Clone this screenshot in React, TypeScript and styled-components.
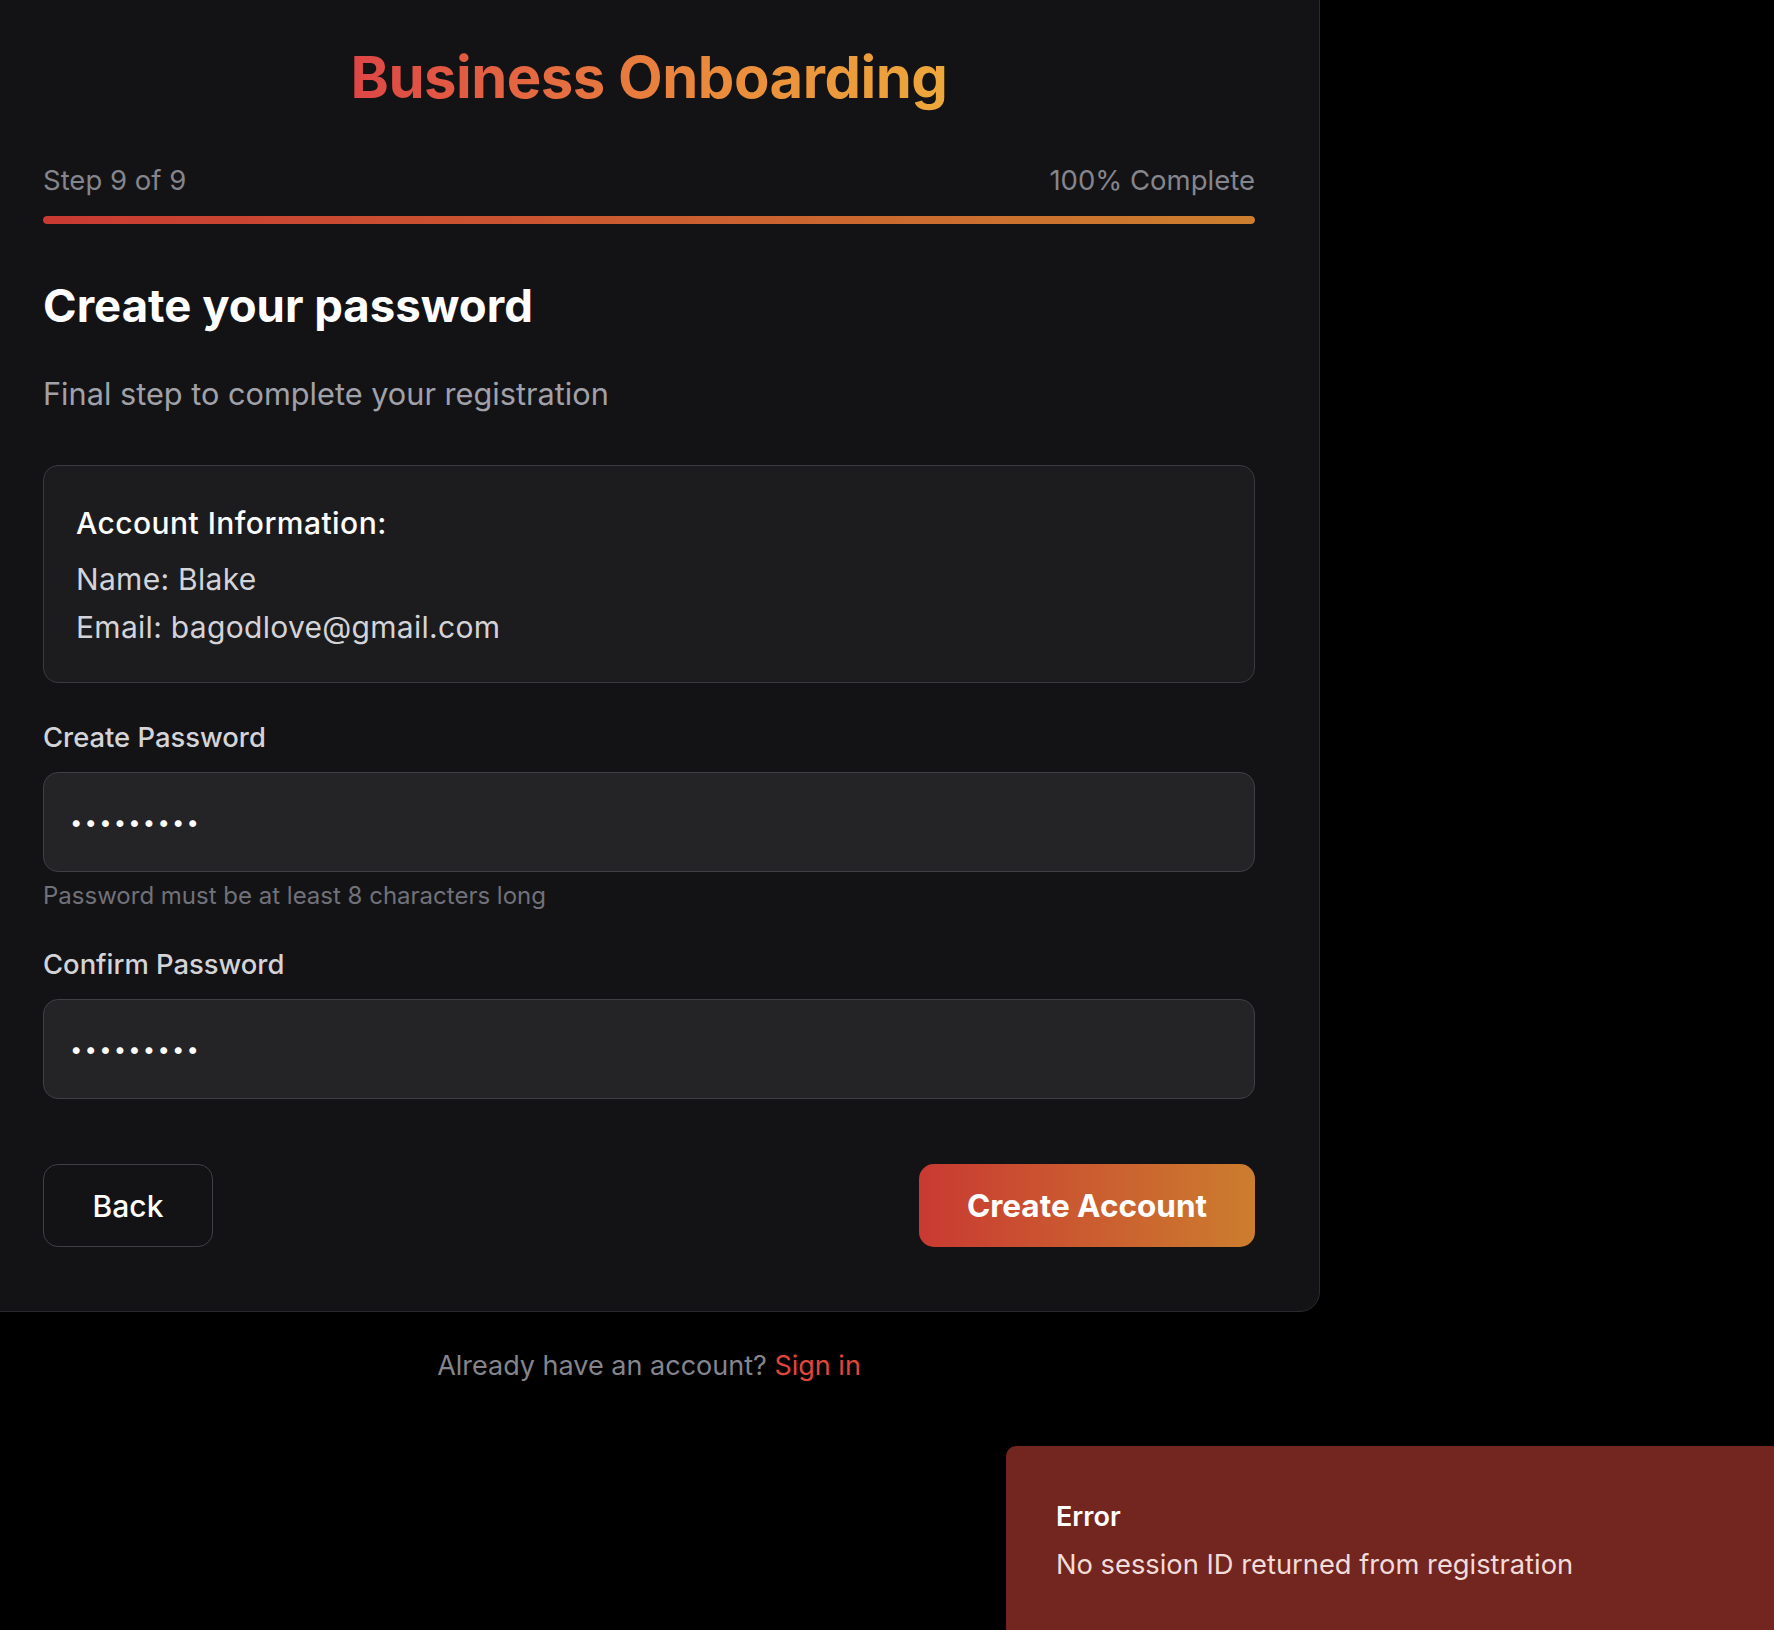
import { createGlobalStyle, styled } from "styled-components";

const GlobalStyle = createGlobalStyle`
  html, body {
    margin: 0;
    padding: 0;
    background: #000;
    overflow: hidden;
  }
  body {
    font-family: Inter, "Noto Sans", "Liberation Sans", sans-serif;
    color: #fff;
  }
  * {
    box-sizing: border-box;
  }
`;

const Page = styled.div`
  width: 1342px;
  margin: -24px 0 0 -22px;
  display: flex;
  flex-direction: column;
  align-items: center;
`;

const Card = styled.div`
  width: 100%;
  background: #131315;
  border: 1px solid #2a2a2e;
  border-radius: 20px;
  padding: 64px;
  display: flex;
  flex-direction: column;
`;

const Title = styled.h1`
  margin: 0 0 47px;
  text-align: center;
  font-size: 58px;
  line-height: 72px;
  font-weight: 700;
  letter-spacing: -0.5px;
  background: linear-gradient(90deg, #de4646 0%, #ea8a3c 60%, #eda83a 100%);
  -webkit-background-clip: text;
  background-clip: text;
  color: transparent;
  align-self: center;
`;

const StepRow = styled.div`
  display: flex;
  justify-content: space-between;
  font-size: 27.5px;
  line-height: 40px;
  color: #85858d;
`;

const Track = styled.div`
  margin-top: 16px;
  height: 8px;
  border-radius: 4px;
  background: #2a2a2e;
  overflow: hidden;
`;

const Fill = styled.div`
  height: 100%;
  border-radius: 4px;
  background: linear-gradient(90deg, #c93a32, #cc7f2e);
`;

const Heading = styled.h2`
  margin: 55px 0 0;
  font-size: 45.5px;
  line-height: 54px;
  font-weight: 700;
  color: #fff;
`;

const Subtitle = styled.p`
  margin: 40px 0 0;
  font-size: 30.7px;
  line-height: 42px;
  color: #a1a1a9;
`;

const InfoBox = styled.div`
  margin-top: 50px;
  background: #1c1c1f;
  border: 1px solid #3a3a40;
  border-radius: 15px;
  padding: 37px 32px 31px;
`;

const InfoTitle = styled.div`
  font-size: 30px;
  line-height: 40px;
  font-weight: 500;
  letter-spacing: 0.45px;
  color: #fff;
  margin-bottom: 12px;
`;

const InfoRow = styled.div`
  font-size: 30px;
  line-height: 48px;
  letter-spacing: 0.3px;
  color: #d4d4d8;
`;

const Field = styled.div<{ $gap: number }>`
  margin-top: ${(p) => p.$gap}px;
  display: flex;
  flex-direction: column;
`;

const Label = styled.label`
  font-size: 27.4px;
  line-height: 38px;
  font-weight: 500;
  color: #d4d4d8;
  margin-bottom: 16px;
`;

const Input = styled.input`
  height: 100px;
  width: 100%;
  background: #242427;
  border: 1px solid #3f3f46;
  border-radius: 15px;
  padding: 0 26px;
  font-family: Inter, "Noto Sans", sans-serif;
  font-size: 22px;
  letter-spacing: 2.2px;
  color: #fff;
  outline: none;
`;

const Hint = styled.div`
  margin-top: 8px;
  font-size: 24px;
  line-height: 32px;
  color: #71717a;
`;

const Actions = styled.div`
  margin-top: 65px;
  display: flex;
  justify-content: space-between;
`;

const Button = styled.button<{ $primary?: boolean }>`
  height: 83px;
  width: ${(p) => (p.$primary ? 336 : 170)}px;
  border-radius: 15px;
  font-family: Inter, "Noto Sans", sans-serif;
  font-size: ${(p) => (p.$primary ? 31.5 : 30)}px;
  font-weight: ${(p) => (p.$primary ? 700 : 500)};
  color: #fff;
  cursor: pointer;
  border: ${(p) => (p.$primary ? "none" : "1px solid #3f3f46")};
  background: ${(p) =>
    p.$primary ? "linear-gradient(90deg, #c93a32, #cc7d2e)" : "transparent"};
`;

const Footer = styled.p`
  margin: 35px 0 0;
  font-size: 27px;
  line-height: 38px;
  color: #85858d;

  a {
    color: #e0463c;
    text-decoration: none;
  }
`;

const Toast = styled.div`
  position: fixed;
  left: 1006px;
  top: 1446px;
  width: 860px;
  height: 240px;
  background: #73251f;
  border-radius: 10px;
  padding: 52px 50px;
`;

const ToastTitle = styled.div`
  font-size: 27px;
  line-height: 38px;
  font-weight: 600;
  color: #fff;
`;

const ToastText = styled.div`
  margin-top: 10px;
  font-size: 27.3px;
  line-height: 38px;
  color: #f1dcda;
`;

export default function App() {
  const progress = 100;

  return (
    <>
      <GlobalStyle />
      <Page>
        <Card>
          <Title>Business Onboarding</Title>
          <StepRow>
            <span>Step 9 of 9</span>
            <span>{progress}% Complete</span>
          </StepRow>
          <Track>
            <Fill style={{ width: `${progress}%` }} />
          </Track>

          <Heading>Create your password</Heading>
          <Subtitle>Final step to complete your registration</Subtitle>

          <InfoBox>
            <InfoTitle>Account Information:</InfoTitle>
            <InfoRow>Name: Blake</InfoRow>
            <InfoRow>Email: bagodlove@gmail.com</InfoRow>
          </InfoBox>

          <Field $gap={35}>
            <Label>Create Password</Label>
            <Input type="password" defaultValue="blake1234" readOnly />
            <Hint>Password must be at least 8 characters long</Hint>
          </Field>

          <Field $gap={33}>
            <Label>Confirm Password</Label>
            <Input type="password" defaultValue="blake1234" readOnly />
          </Field>

          <Actions>
            <Button>Back</Button>
            <Button $primary>Create Account</Button>
          </Actions>
        </Card>

        <Footer>
          Already have an account? <a href="#">Sign in</a>
        </Footer>
      </Page>

      <Toast>
        <ToastTitle>Error</ToastTitle>
        <ToastText>No session ID returned from registration</ToastText>
      </Toast>
    </>
  );
}
